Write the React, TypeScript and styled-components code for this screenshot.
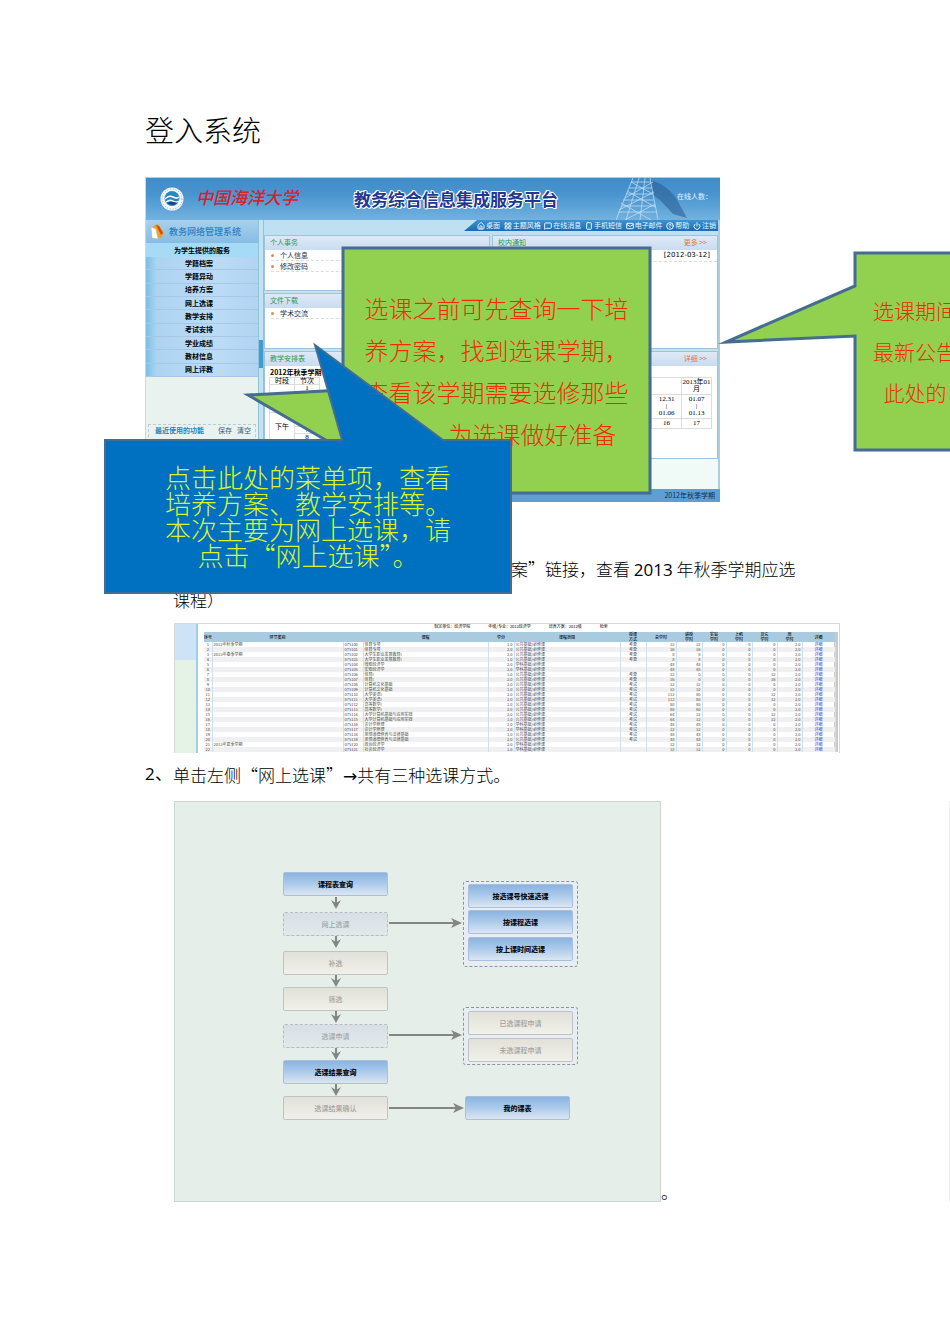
import React from 'react';
import styled, { createGlobalStyle, css } from 'styled-components';
import { CircleHelp, House, LayoutGrid, Mail, MessageSquare, Power, Smartphone } from 'lucide-react';

const GlobalStyle = createGlobalStyle`
  *, *::before, *::after { box-sizing: border-box; }
  body {
    margin: 0;
    background: #fff;
    color: #000;
    font-family: "Noto Sans CJK SC", "Liberation Sans", sans-serif;
  }
  a { color: inherit; text-decoration: none; }
  button { font-family: inherit; }
`;

const Page = styled.main`
  min-height: 100vh;
  padding: 109px 110px 100px 145px;
  overflow-x: clip;
`;

const Heading = styled.h1`
  margin: 0 0 28px;
  font-size: 29px;
  font-weight: 300;
  line-height: 40px;
`;

const Figure = styled.figure`
  position: relative;
  max-width: 575px;
  margin: 0 0 51px;
`;

/* ---------- portal ---------- */

const Portal = styled.div`
  display: flex;
  flex-direction: column;
  height: 325px;
  border-left: 1px solid #c4dbe6;
  border-top: 1px solid #a5d0de;
  font-size: 7px;
  line-height: 11px;
`;

const Banner = styled.header`
  position: relative;
  display: flex;
  align-items: center;
  flex: none;
  height: 42px;
  padding: 0 8px 0 14px;
  background: linear-gradient(180deg, #3f8bc9 0%, #4a95cf 40%, #72b2df 100%);
`;

const University = styled.span`
  margin-left: 12px;
  color: #d8202c;
  font-family: "Liberation Serif", "Noto Sans CJK SC", serif;
  font-size: 17px;
  font-style: italic;
  font-weight: 500;
  line-height: 24px;
`;

const Platform = styled.span`
  margin-left: 56px;
  color: #22388e;
  font-size: 17px;
  font-weight: 700;
  line-height: 24px;
  text-shadow: 1px 0 #fff, -1px 0 #fff, 0 1px #fff, 0 -1px #fff, 1px 1px #fff, -1px -1px #fff;
`;

const Tower = styled.svg`
  position: absolute;
  right: 28px;
  bottom: 0;
`;

const Online = styled.span`
  position: relative;
  margin-left: auto;
  margin-bottom: 6px;
  color: #e3f1fa;
`;

const Middle = styled.div`
  display: flex;
  flex: 1;
  min-height: 0;
`;

const Sidebar = styled.nav`
  display: flex;
  flex-direction: column;
  flex: none;
  width: 112px;
  background: #eaf2f0;
`;

const SideTitle = styled.div`
  display: flex;
  align-items: center;
  gap: 4px;
  height: 23px;
  padding-left: 3px;
  background: linear-gradient(180deg, #a9d1ee, #86bce4);
  color: #2b7fc0;
  font-size: 9px;
  font-weight: 500;
`;

const SideGroup = styled.div`
  height: 14px;
  background: #a6dbf8;
  font-weight: 700;
  line-height: 14px;
  text-align: center;
`;

const SideMenu = styled.div`
  display: grid;
  grid-template-rows: repeat(9, 1fr);
  height: 120px;
`;

const SideLink = styled.a`
  display: flex;
  align-items: center;
  padding-left: 39px;
  border-bottom: 1px solid #a8c6e6;
  background: linear-gradient(90deg, #79bfe3 0, #acd3f1 10px, #bcdcf6 60%, #b2d4f2 100%);
  font-weight: 700;
`;

const Recent = styled.div`
  display: flex;
  gap: 5px;
  margin: auto 2px 0;
  height: 65px;
  padding: 0 4px 0 6px;
  border: 1px dashed #b9cdd0;
  color: #35607f;
`;

const RecentTitle = styled.span`
  margin-right: auto;
  color: #1f84bd;
  font-weight: 700;
`;

const Splitter = styled.div`
  display: flex;
  align-items: center;
  flex: none;
  width: 6px;
  border: 1px solid #8fc4d8;
  border-width: 0 1px;
  background: #c3e3f4;

  &::before {
    content: "";
    width: 4px;
    height: 28px;
    margin-bottom: 2px;
    background: #3f9bd0;
  }
`;

const Content = styled.div`
  display: flex;
  flex-direction: column;
  flex: 1;
  min-width: 0;
  border-right: 2px solid #a9d0dc;
  background: #f0faf6;
`;

const TopStrip = styled.div`
  display: flex;
  justify-content: flex-end;
  height: 15px;
  background: #bfe0f1;
`;

const Toolbar = styled.div`
  display: flex;
  align-items: center;
  justify-content: space-between;
  width: 254px;
  height: 11px;
  padding: 0 2px 0 13px;
  background: linear-gradient(180deg, #3c93d0, #1d6bb2);
  clip-path: polygon(13px 0, 100% 0, 100% 100%, 0 100%);
`;

const Tool = styled.a`
  display: flex;
  align-items: center;
  gap: 1px;
  color: #e8f4fc;
`;

const Panels = styled.div`
  display: grid;
  grid-template-columns: 1fr 1fr;
  grid-template-rows: 56px 56px 108px;
  gap: 2px;
  background: #c5e3ee;
`;

const PanelBox = styled.section<{ $tall?: boolean; $wide?: boolean }>`
  overflow: hidden;
  border: 1px solid #9ec4dd;
  background: #fff;
  ${p => p.$tall && css`grid-column: 2; grid-row: 1 / 3;`}
  ${p => p.$wide && css`grid-column: 1 / 3; grid-row: 3;`}
`;

const PanelHead = styled.div`
  display: flex;
  justify-content: space-between;
  height: 14px;
  padding: 0 10px 0 5px;
  background: linear-gradient(180deg, #dfe9f7, #c9dcf0);
  color: #2f9a4f;
  line-height: 12px;
`;

const More = styled.a`
  color: #dd7a45;
`;

const PanelItem = styled.a`
  display: flex;
  align-items: center;
  gap: 6px;
  height: 11px;
  margin: 0 6px;
  border-bottom: 1px dashed #dcdcdc;
  color: #17344c;
  white-space: pre;

  &::before {
    content: "";
    width: 3px;
    height: 3px;
    border-radius: 2px;
    background: #e08a5c;
  }
`;

const NewsDate = styled.div`
  padding: 0 7px;
  border-bottom: 1px dashed #dcdcdc;
  font-family: "DejaVu Sans", sans-serif;
  text-align: right;
`;

const Schedule = styled.div`
  display: flex;
  justify-content: space-between;
  align-items: flex-start;
  padding: 0 5px 0 4px;
`;

const TermTitle = styled.div`
  height: 10px;
  margin-top: 1px;
  padding-left: 5px;
  font-weight: 700;
  line-height: 10px;
`;

const SlotTable = styled.table`
  border-collapse: collapse;
  font-family: "Liberation Serif", "Noto Sans CJK SC", serif;
  line-height: 6px;

  th, td {
    width: 25px;
    height: 7px;
    padding: 0;
    border: 1px solid #dcdcdc;
    font-weight: 400;
    text-align: center;
  }
`;

const WeekTable = styled(SlotTable)`
  line-height: 7px;

  th, td { width: 30px; padding: 1px 0; }
`;

const Footer = styled.footer`
  flex: none;
  height: 13px;
  padding-right: 5px;
  background: #5d9fd5;
  color: #12304c;
  line-height: 12px;
  text-align: right;
`;

/* ---------- callouts ---------- */

const CalloutBox = styled.div<{ $left: number; $top: number; $width: number; $height: number }>`
  position: absolute;
  left: ${p => p.$left}px;
  top: ${p => p.$top}px;
  width: ${p => p.$width}px;
  height: ${p => p.$height}px;
`;

const CalloutShape = styled.svg`
  position: absolute;
  inset: 0;
  overflow: visible;
`;

const CalloutText = styled.p<{ $tail: string; $color: string; $size: number; $line: number }>`
  position: relative;
  display: flex;
  align-items: center;
  justify-content: center;
  height: 100%;
  margin: 0;
  padding: ${p => p.$tail};
  color: ${p => p.$color};
  font-size: ${p => p.$size}px;
  font-weight: 300;
  line-height: ${p => p.$line}px;
  text-align: center;
  white-space: pre;
`;

/* ---------- steps ---------- */

const Step = styled.section`
  display: grid;
  grid-template-columns: 28px minmax(0, 1fr);
  font-size: 17px;
  font-weight: 300;
  line-height: 31px;
`;

const StepText = styled.p<{ $indent?: number }>`
  grid-column: 2;
  margin: 0;
  text-indent: ${p => p.$indent ?? 0}px;
  white-space: nowrap;
`;

const Latin = styled.span`
  font-family: "Open Sans", sans-serif;
  font-weight: 400;
  line-height: 20px;
`;

const StepNumber = styled(Latin)`
  line-height: 30px;
`;

const Arrow = styled.b`
  font-family: "DejaVu Sans", sans-serif;
  line-height: 20px;
`;

const StepBody = styled.div`
  grid-column: 2;
  padding-left: 1px;
`;

const CourseSheet = styled.div`
  display: flex;
  height: 130px;
  margin: 8px 0 6px;
  overflow: hidden;
  border: 1px solid #d4d8da;
  border-bottom: 0;
  background: #fff;
  font-size: 4px;
  font-weight: 400;
  line-height: 5px;
`;

const SheetSide = styled.div`
  flex: none;
  width: 23px;
  border-right: 2px solid #9fd0e4;
  background: linear-gradient(180deg, #cfe3f6 36px, #e5f2e6 36px);
`;

const SheetMain = styled.div`
  flex: 1;
  min-width: 0;
  padding: 0 1px 0 6px;
`;

const Filters = styled.div`
  display: flex;
  justify-content: center;
  gap: 18px;
  height: 8px;
  line-height: 4px;
`;

const SheetScroll = styled.div`
  display: flex;
  border-right: 4px solid #c9c9c6;
`;

const CourseTable = styled.table`
  width: 100%;
  table-layout: fixed;
  border-collapse: collapse;

  th {
    height: 10px;
    padding: 0;
    background: #a9cbe0;
    font-weight: 500;
    text-align: center;
    white-space: nowrap;
  }
  td {
    height: 5px;
    padding: 0 1px;
    border-right: 1px solid #d3dfe8;
    color: #4a4a4a;
    text-align: right;
    white-space: nowrap;
  }
  td.text { text-align: left; }
  td.mid { padding: 0; text-align: center; }
  tbody tr:nth-child(even) { background: #f0f0f2; }
  a { color: #2646e0; }
`;

/* ---------- flow chart ---------- */

const ChartRow = styled.div`
  display: flex;
  align-items: flex-end;
  margin: 11px -110px 0 0;
  border-right: 1px solid #f0f0f0;
  line-height: 20px;
`;

const Chart = styled.div`
  position: relative;
  flex: none;
  width: 487px;
  height: 401px;
  border: 1px solid #cdd5d1;
  background: #e6eeea;
`;

const Arrows = styled.svg`
  position: absolute;
  inset: -1px;
`;

type Kind = 'active' | 'idle' | 'ghost';

const kinds = {
  active: css`
    border: 1px solid #a9bfdc;
    background: linear-gradient(180deg, #8ab4e0, #a9c8ea 45%, #dbe6f1);
    color: #0a0f18;
    font-weight: 900;
  `,
  idle: css`
    border: 1px solid #bfc3c6;
    background: linear-gradient(180deg, #e1e1d9, #f1f0ea);
    color: #a3a3a0;
    font-weight: 500;
  `,
  ghost: css`
    border: 1px dashed #b5bcc8;
    background: linear-gradient(180deg, #d8e0e6, #e2e9ea);
    color: #a3a7ab;
    font-weight: 500;
  `,
};

const Node = styled.button<{ $kind: Kind; $x: number; $y: number }>`
  position: absolute;
  left: ${p => p.$x}px;
  top: ${p => p.$y}px;
  width: 105px;
  height: 24px;
  padding: 0;
  border-radius: 2px;
  font-size: 7px;
  line-height: 10px;
  ${p => kinds[p.$kind]}
`;

const Group = styled.div<{ $y: number; $height: number }>`
  position: absolute;
  left: 288px;
  top: ${p => p.$y}px;
  width: 115px;
  height: ${p => p.$height}px;
  border: 1px dashed #8c949c;
  border-radius: 3px;
  background: #e7edf2;
`;

const menu = ['学籍档案', '学籍异动', '培养方案', '网上选课', '教学安排', '考试安排', '学业成绩', '教材信息', '网上评教'];

const tools = [
  { Icon: House, label: '桌面' },
  { Icon: LayoutGrid, label: '主题风格' },
  { Icon: MessageSquare, label: '在线消息' },
  { Icon: Smartphone, label: '手机短信' },
  { Icon: Mail, label: '电子邮件' },
  { Icon: CircleHelp, label: '帮助' },
  { Icon: Power, label: '注销' },
];

const columns: [string, number][] = [
  ['序号', 8], ['环节类别', 131], ['', 20], ['课程', 125], ['学分', 26], ['课程范围', 106], ['授课 方式', 26],
  ['总学时', 30], ['讲授 学时', 26], ['实验 学时', 24], ['上机 学时', 26], ['其它 学时', 25], ['周 学时', 25], ['详细', 33],
];

const courses: [string, string, string, string, string, string, string][] = [
  ['2012年秋季学期', '体育专项', '公共基础/必修课', '考查', '32', '32', '0'],
  ['', '体育专项', '公共基础/必修课', '考查', '36', '36', '0'],
  ['2013年春季学期', '大学生职业发展教育I', '公共基础/必修课', '考查', '8', '8', '0'],
  ['', '大学生职业发展教育I', '公共基础/必修课', '考查', '8', '8', '0'],
  ['', '微观经济学', '学科基础/必修课', '', '48', '48', '0'],
  ['', '宏观经济学', '学科基础/必修课', '', '48', '48', '0'],
  ['', '体育I', '公共基础/必修课', '考查', '32', '0', '32'],
  ['', '体育I', '公共基础/必修课', '考查', '36', '0', '36'],
  ['', '计算机文化基础', '公共基础/必修课', '考试', '32', '32', '0'],
  ['', '计算机文化基础', '公共基础/必修课', '考试', '32', '32', '0'],
  ['', '大学英语I', '公共基础/必修课', '考试', '112', '80', '32'],
  ['', '大学英语I', '公共基础/必修课', '考试', '112', '80', '32'],
  ['', '高等数学I', '公共基础/必修课', '考试', '80', '80', '0'],
  ['', '高等数学I', '公共基础/必修课', '考试', '80', '80', '0'],
  ['', '大学计算机基础与应用实践', '公共基础/必修课', '考试', '64', '32', '32'],
  ['', '大学计算机基础与应用实践', '公共基础/必修课', '考试', '64', '32', '32'],
  ['', '会计学原理', '学科基础/必修课', '考试', '48', '48', '0'],
  ['', '会计学原理', '学科基础/必修课', '考试', '32', '32', '0'],
  ['', '思想道德修养与法律基础', '公共基础/必修课', '考试', '48', '48', '0'],
  ['', '思想道德修养与法律基础', '公共基础/必修课', '考试', '48', '48', '0'],
  ['2013年夏季学期', '政治经济学', '学科基础/必修课', '', '32', '32', '0'],
  ['', '社会经济学', '学科基础/必修课', '', '32', '32', '0'],
];

const nodes: [string, Kind, number, number][] = [
  ['课程表查询', 'active', 108, 70],
  ['网上选课', 'ghost', 108, 110],
  ['补选', 'idle', 108, 149],
  ['筛选', 'idle', 108, 185],
  ['选课申请', 'ghost', 108, 222],
  ['选课结果查询', 'active', 108, 258],
  ['选课结果确认', 'idle', 108, 294],
  ['按选课号快速选课', 'active', 293, 82],
  ['按课程选课', 'active', 293, 108],
  ['按上课时间选课', 'active', 293, 135],
  ['已选课程申请', 'idle', 293, 209],
  ['未选课程申请', 'idle', 293, 236],
  ['我的课表', 'active', 290, 294],
];

const downArrows = [96, 135, 174, 210, 247, 283];
const rightArrows: [number, number][] = [[122, 286], [234, 286], [307, 288]];

function Panel({ title, more, tall, wide, children }: {
  title: string; more?: string; tall?: boolean; wide?: boolean; children: React.ReactNode;
}) {
  return (
    <PanelBox $tall={tall} $wide={wide}>
      <PanelHead>
        <span>{title}</span>
        {more && <More href="#">{more} &gt;&gt;</More>}
      </PanelHead>
      {children}
    </PanelBox>
  );
}

function Callout({ box, points, fill, stroke, tail, color, size, line, children }: {
  box: [number, number, number, number]; points: string; fill: string; stroke: number;
  tail: string; color: string; size: number; line: number; children: React.ReactNode;
}) {
  return (
    <CalloutBox $left={box[0]} $top={box[1]} $width={box[2]} $height={box[3]}>
      <CalloutShape width={box[2]} height={box[3]}>
        <polygon points={points} fill={fill} stroke="#456d91" strokeWidth={stroke} strokeMiterlimit={10} />
      </CalloutShape>
      <CalloutText $tail={tail} $color={color} $size={size} $line={line}>{children}</CalloutText>
    </CalloutBox>
  );
}

function PortalScreen() {
  return (
    <Portal>
      <Banner>
        <svg width="24" height="24" viewBox="0 0 24 24">
          <circle cx="12" cy="12" r="11.5" fill="#f4f9fc" />
          <circle cx="12" cy="12" r="10" fill="none" stroke="#7f9fc4" strokeWidth="1" strokeDasharray="1 1.8" />
          <circle cx="12" cy="11.5" r="7.5" fill="#2c86c0" />
          <path d="M5 12q4-4 8-2t6 0M6 15q4-3 7-1t6 0" stroke="#fff" strokeWidth="1.4" fill="none" />
          <path d="M7 16q5-2 10 0-4 4-10 0" fill="#1b3f8f" />
        </svg>
        <University>中国海洋大学</University>
        <Platform>教务综合信息集成服务平台</Platform>
        <Tower width="76" height="42" viewBox="0 0 76 42">
          <path d="M34 2q16 4 26 18l11 20-14-4-13-14-8-6z" fill="#2b5f94" opacity=".6" />
          <path d="M17 0 0 42M23 0 10 42M29 0 24 42M34 0 42 42M15 4h20M13 10h23M10 16h27M7 22h31M5 28h35M2 34h39M15 4l22 12M37 4 9 20M11 13l28 16M38 14 3 32M5 25l30 17M39 26 9 42" fill="none" stroke="#c3dff1" strokeWidth="1" opacity=".75" />
        </Tower>
        <Online>在线人数：</Online>
      </Banner>
      <Middle>
        <Sidebar>
          <SideTitle>
            <svg width="16" height="17" viewBox="0 0 16 17">
              <path d="M4 3 9 1l6 9-3 5-6-2z" fill="#f0a31c" />
              <path d="m7 2 3 1 4 7-2 2z" fill="#d04a1c" />
              <path d="m2 4 5 2 2 10-6-1z" fill="#fff" stroke="#c9b98c" strokeWidth=".6" />
            </svg>
            教务网络管理系统
          </SideTitle>
          <SideGroup>为学生提供的服务</SideGroup>
          <SideMenu>
            {menu.map(m => <SideLink href="#" key={m}>{m}</SideLink>)}
          </SideMenu>
          <Recent>
            <RecentTitle>最近使用的功能</RecentTitle>
            <a href="#">保存</a>
            <a href="#">清空</a>
          </Recent>
        </Sidebar>
        <Splitter />
        <Content>
          <TopStrip>
            <Toolbar>
              {tools.map(({ Icon, label }) => (
                <Tool href="#" key={label}><Icon size={8} strokeWidth={3} />{label}</Tool>
              ))}
            </Toolbar>
          </TopStrip>
          <Panels>
            <Panel title="个人事务">
              <PanelItem href="#">个人信息</PanelItem>
              <PanelItem href="#">修改密码</PanelItem>
            </Panel>
            <Panel title="校内通知" more="更多" tall>
              <NewsDate>[2012-03-12]</NewsDate>
            </Panel>
            <Panel title="文件下载">
              <PanelItem href="#">学术交流</PanelItem>
            </Panel>
            <Panel title="教学安排表" more="详细" wide>
              <TermTitle>2012年秋季学期</TermTitle>
              <Schedule>
                <SlotTable>
                  <thead><tr><th>时段</th><th>节次</th></tr></thead>
                  <tbody>
                    {[1, 2, 3, 4, 5, 6, 7, 8].map(n => (
                      <tr key={n}>
                        {n % 4 === 1 && <td rowSpan={4}>{n === 1 ? '上午' : '下午'}</td>}
                        <td>{n}</td>
                      </tr>
                    ))}
                  </tbody>
                </SlotTable>
                <WeekTable>
                  <thead><tr><th /><th>2013年01<br />月</th></tr></thead>
                  <tbody>
                    <tr><td>12.31<br />|<br />01.06</td><td>01.07<br />|<br />01.13</td></tr>
                    <tr><td>16</td><td>17</td></tr>
                  </tbody>
                </WeekTable>
              </Schedule>
            </Panel>
          </Panels>
        </Content>
      </Middle>
      <Footer>2012年秋季学期</Footer>
    </Portal>
  );
}

function CourseList() {
  return (
    <CourseSheet>
      <SheetSide />
      <SheetMain>
        <Filters>
          <span>制定单位：经济学院</span>
          <span>年级/专业：2012经济学</span>
          <span>培养方案：2012级</span>
          <span>检索</span>
        </Filters>
        <SheetScroll>
          <CourseTable>
            <colgroup>
              {columns.map(([, w], i) => <col key={i} width={w} />)}
            </colgroup>
            <thead>
              <tr>{columns.map(([c], i) => <th key={i}>{c.split(' ').map((t, k) => <div key={k}>{t}</div>)}</th>)}</tr>
            </thead>
            <tbody>
              {courses.map(([term, name, scope, exam, total, taught, other], i) => (
                <tr key={i}>
                  <td className="mid">{i + 1}</td>
                  <td className="text">{term}</td>
                  <td className="text">{`07${5100 + i}`}</td>
                  <td className="text">{name}</td>
                  <td>{i % 3 ? '2.0' : '1.0'}</td>
                  <td className="text">{scope}</td>
                  <td className="mid">{exam}</td>
                  <td>{total}</td>
                  <td>{taught}</td>
                  <td>0</td>
                  <td>0</td>
                  <td>{other}</td>
                  <td>2.0</td>
                  <td className="mid"><a href="#">详细</a></td>
                </tr>
              ))}
            </tbody>
          </CourseTable>
        </SheetScroll>
      </SheetMain>
    </CourseSheet>
  );
}

function FlowChart() {
  return (
    <Chart>
      <Group $y={79} $height={86} />
      <Group $y={205} $height={58} />
      <Arrows width="487" height="401" fill="#858585" stroke="#858585">
        {downArrows.map(y => (
          <g key={y}>
            <path d={`M162 ${y}v8`} strokeWidth="2" />
            <path d={`M157 ${y + 3}l5 3 5-3-5 9z`} stroke="none" />
          </g>
        ))}
        {rightArrows.map(([y, x]) => (
          <g key={y}>
            <path d={`M215 ${y}H${x - 6}`} strokeWidth="2" />
            <path d={`M${x - 9} ${y - 5}l11 5-11 5 3-5z`} stroke="none" />
          </g>
        ))}
      </Arrows>
      {nodes.map(([label, kind, x, y]) => (
        <Node type="button" key={label} $kind={kind} $x={x} $y={y}>{label}</Node>
      ))}
    </Chart>
  );
}

export default function App() {
  return (
    <Page lang="zh-CN">
      <GlobalStyle />
      <Heading>登入系统</Heading>
      <Figure>
        <PortalScreen />
        <Callout
          box={[98, 70, 408, 247]}
          points="100,1 407,1 407,246 100,246 100,203 5,148 100,143"
          fill="#92d050" stroke={3} tail="0 0 0 99px" color="#f22a08" size={24} line={42}
        >
          {'选课之前可先查询一下培\n养方案，找到选课学期，\n查看该学期需要选修那些\n课程，为选课做好准备'}
        </Callout>
        <Callout
          box={[575, 75, 255, 199]}
          points="135,1 254,1 254,198 135,198 135,84 6,90 135,34"
          fill="#92d050" stroke={3} tail="0 0 0 135px" color="#f22a08" size={21} line={41}
        >
          {'选课期间\n最新公告\n此处的'}
        </Callout>
        <Callout
          box={[-41, 165, 408, 252]}
          points="1,98 238,98 211,3 339,98 407,98 407,251 1,251"
          fill="#0070c0" stroke={2} tail="96px 0 0" color="#d8f52c" size={26} line={26}
        >
          {'点击此处的菜单项，查看\n培养方案、教学安排等。\n本次主要为网上选课，请\n点击“网上选课”。'}
        </Callout>
      </Figure>

      <Step>
        <StepText $indent={338}>
          案”链接，查看 <Latin>2013</Latin> 年秋季学期应选<br />课程）
        </StepText>
        <StepBody><CourseList /></StepBody>
      </Step>

      <Step>
        <StepNumber>2、</StepNumber>
        <StepText>单击左侧“网上选课”<Arrow>→</Arrow>共有三种选课方式。</StepText>
        <StepBody>
          <ChartRow><FlowChart />。</ChartRow>
        </StepBody>
      </Step>
    </Page>
  );
}
